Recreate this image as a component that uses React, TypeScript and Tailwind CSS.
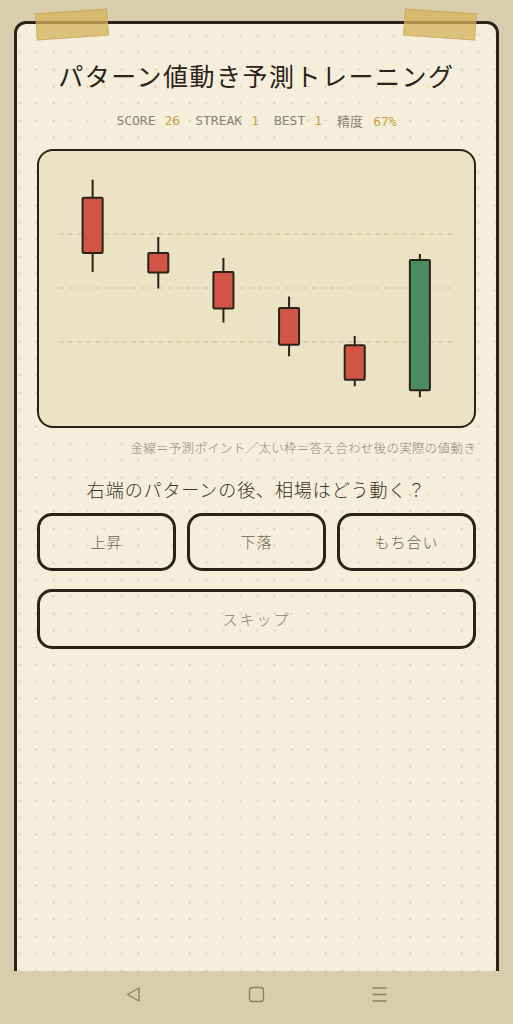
import React from 'react';

const ink = '#2a2418';

type Candle = { x: number; top: number; bottom: number; hi: number; lo: number; up?: boolean };

const candles: Candle[] = [
  { x: 93, top: 198, bottom: 253, hi: 180, lo: 272 },
  { x: 158.5, top: 253, bottom: 272.5, hi: 237, lo: 288.5 },
  { x: 223.5, top: 272, bottom: 308.5, hi: 258, lo: 322.5 },
  { x: 289, top: 308, bottom: 344.5, hi: 296.5, lo: 356 },
  { x: 354.5, top: 345, bottom: 379.5, hi: 336, lo: 386 },
  { x: 419.5, top: 260, bottom: 390, hi: 254, lo: 397, up: true },
];

const Chart = () => (
  <div className="h-[279px] w-full overflow-hidden rounded-[16px] border-[2.5px] border-[#2a2418] bg-[#ece2c4]">
    <svg viewBox="39.5 151.5 434 274" className="block h-full w-full">
      {[234, 288, 342].map((y) => (
        <line key={y} x1={60} x2={451} y1={y} y2={y} stroke="#cfc4a4" strokeWidth={1.2} strokeDasharray="4 5" />
      ))}
      {candles.map((c, i) => (
        <g key={i}>
          <line x1={c.x} x2={c.x} y1={c.hi} y2={c.lo} stroke={ink} strokeWidth={2} />
          <rect
            x={c.x - 10}
            y={c.top}
            width={20}
            height={c.bottom - c.top}
            rx={1}
            fill={c.up ? '#4b8b5e' : '#d15446'}
            stroke={ink}
            strokeWidth={2}
          />
        </g>
      ))}
    </svg>
  </div>
);

const Stat = ({ label, value }: { label: string; value: string }) => (
  <span className="flex items-baseline gap-[9px]">
    <span className="text-[#8b8471]">{label}</span>
    <span className="text-[#c9a240]">{value}</span>
  </span>
);

export default function App() {
  return (
    <div
      className="flex h-[1024px] w-[513px] flex-col overflow-hidden bg-[#d9cdae]"
      style={{ fontFamily: '"Noto Sans CJK JP", "Noto Sans", sans-serif' }}
    >
      <div className="relative flex-1 overflow-hidden px-[14px] pt-[21px]">
        <div className="h-[980px] rounded-t-[12px] border-[3px] border-[#2a2418] bg-[#f5eedb] bg-[radial-gradient(circle,#e2d9c0_1px,transparent_1.3px)] bg-[size:17px_17px] bg-[position:11px_3px] px-[20px]">
          <h1 className="mt-[33px] text-center text-[25px] font-normal leading-[36px] tracking-[1.5px] text-[#2a2418]">
            パターン値動き予測トレーニング
          </h1>

          <div
            className="mt-[18px] flex justify-center gap-[15px] text-[13px] leading-[20px]"
            style={{ fontFamily: '"DejaVu Sans Mono", "Noto Sans CJK JP", monospace' }}
          >
            <Stat label="SCORE" value="26" />
            <Stat label="STREAK" value="1" />
            <Stat label="BEST" value="1" />
            <span className="flex items-baseline gap-[10px]">
              <span className="text-[#8b8471]" style={{ fontFamily: '"Noto Sans CJK JP", sans-serif' }}>
                精度
              </span>
              <span className="text-[#c9a240]">67%</span>
            </span>
          </div>

          <div className="mt-[17px]">
            <Chart />
          </div>

          <p className="mt-[11px] text-right text-[12.5px] font-light leading-[18px] tracking-[0.3px] text-[#8f8773]">
            金線＝予測ポイント／太い枠＝答え合わせ後の実際の値動き
          </p>

          <p className="mt-[18px] text-center text-[18px] font-light leading-[28px] tracking-[0.9px] text-[#3a3327]">
            右端のパターンの後、相場はどう動く？
          </p>

          <div className="mt-[10px] grid grid-cols-3 gap-[11px]">
            {['上昇', '下落', 'もち合い'].map((t) => (
              <button
                key={t}
                className="h-[58px] rounded-[15px] border-[3px] border-[#2a2418] text-[15px] font-light tracking-[1px] text-[#6b6452]"
              >
                {t}
              </button>
            ))}
          </div>

          <button className="mt-[18px] h-[60px] w-full rounded-[15px] border-[3px] border-[#2a2418] text-[15px] font-light tracking-[2px] text-[#8b8471]">
            スキップ
          </button>
        </div>

        <div className="absolute left-[36px] top-[11px] h-[27px] w-[72px] -rotate-[4deg] border border-[#c4a250]/60 bg-[#d6b25a]/75" />
        <div className="absolute left-[404px] top-[11px] h-[27px] w-[72px] rotate-[4deg] border border-[#c4a250]/60 bg-[#d6b25a]/75" />
      </div>

      <div className="flex h-[53px] items-center justify-center gap-[106px] bg-[#d9cdae] pb-[6px]">
        <svg width="17" height="17" viewBox="0 0 17 17" fill="none" stroke="#8c8268" strokeWidth="1.4">
          <path d="M14 2 L2.5 8.5 L14 15 Z" strokeLinejoin="round" />
        </svg>
        <svg width="17" height="17" viewBox="0 0 17 17" fill="none" stroke="#8c8268" strokeWidth="1.4">
          <rect x="1.5" y="1.5" width="14" height="14" rx="3" />
        </svg>
        <svg width="17" height="17" viewBox="0 0 17 17" fill="none" stroke="#8c8268" strokeWidth="1.4">
          <path d="M1.5 2 H15.5 M1.5 8.5 H15.5 M1.5 15 H15.5" />
        </svg>
      </div>
    </div>
  );
}
